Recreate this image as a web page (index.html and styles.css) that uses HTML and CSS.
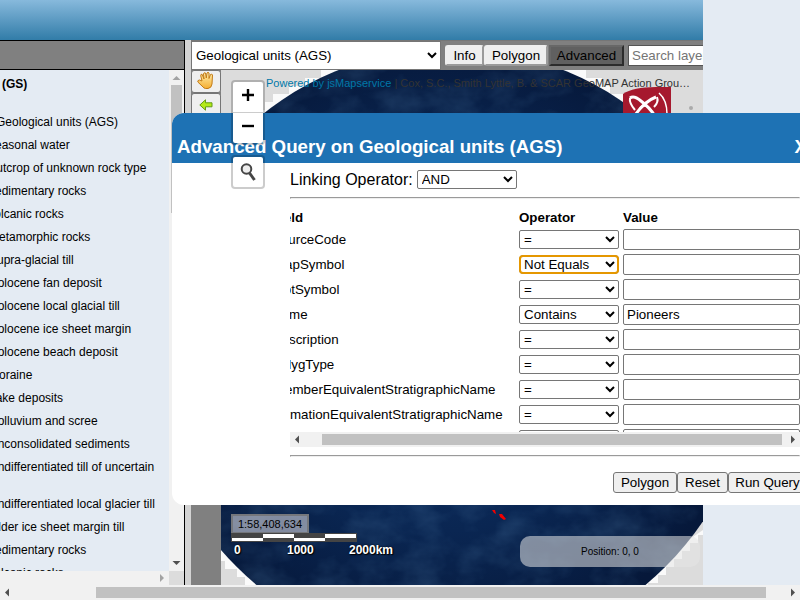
FILE: index.html
```html
<!DOCTYPE html>
<html lang="en">
<head>
<meta charset="utf-8">
<title>Geological units</title>
<link rel="stylesheet" href="styles.css">
</head>
<body>
<div class="page">
  <header class="banner"></header>
  <div class="workspace">
    <aside class="layers">
      <div class="layers-bar"></div>
      <div class="layers-main">
        <div class="layer-list">
          <div class="group">(GS)</div>
          <div class="top">Geological units (AGS)</div>
          <div class="outer">Seasonal water</div>
          <div class="outer">Outcrop of unknown rock type</div>
          <div class="outer">Sedimentary rocks</div>
          <div class="outer">Volcanic rocks</div>
          <div>Metamorphic rocks</div>
          <div>Supra-glacial till</div>
          <div>Holocene fan deposit</div>
          <div>Holocene local glacial till</div>
          <div>Holocene ice sheet margin</div>
          <div>Holocene beach deposit</div>
          <div>Moraine</div>
          <div>Lake deposits</div>
          <div>Colluvium and scree</div>
          <div>Unconsolidated sediments</div>
          <div class="tall">Undifferentiated till of uncertain</div>
          <div>Undifferentiated local glacier till</div>
          <div>Older ice sheet margin till</div>
          <div class="outer">Sedimentary rocks</div>
          <div class="outer">Volcanic rocks</div>
        </div>
        <div class="vscroll">
          <svg width="15" height="15"><path d="M3.500 10h8l-4-4z" fill="#a3a3a3"/></svg>
          <div class="vthumb"></div>
          <svg width="15" height="15"><path d="M3.500 5h8l-4 4z" fill="#505050"/></svg>
        </div>
      </div>
      <div class="layers-hscroll">
        <svg width="15" height="14"><path d="M6 3v8l4-4z" fill="#a3a3a3"/></svg>
        <div class="corner"></div>
      </div>
    </aside>
    <main class="viewer">
      <div class="toolbar">
        <select class="layer-select"><option>Geological units (AGS)</option></select>
        <div class="actions">
          <button>Info</button><button>Polygon</button><button class="active">Advanced</button>
          <input type="text" placeholder="Search layers">
        </div>
      </div>
      <div class="map-row">
        <div class="tools">
          <button><svg class="hand" width="20" height="19" viewBox="0 0 20 19"><defs><linearGradient id="hand" x2="0" y2="1"><stop offset="0" stop-color="#fff0b0"/><stop offset="1" stop-color="#f5ae32"/></linearGradient></defs><path d="M6 10 4.800 5Q4.500 3 6 3.200L8 8 7.500 3Q8 1 9.500 2l.8 5L11 2Q12 .5 13 2v5.500l1.500-4Q16 2.500 16.500 4L16 13q-.5 4-4 4.500H9.500Q8 17.500 6 15L1.800 11Q1.500 9 3.500 9z" fill="url(#hand)" stroke="#c37b16"/></svg></button>
          <button><svg width="14" height="12" viewBox="0 0 14 12"><path d="M.8 6 6.500.8v3h6.500v4H6.500v3.400z" fill="#b4ea16" stroke="#639a17"/></svg></button>
        </div>
        <div class="map">
          <svg class="globe" viewBox="221 70 482 515">
            <defs>
              <radialGradient id="sea" gradientUnits="userSpaceOnUse" cx="440" cy="345" r="310">
                <stop offset="0" stop-color="#103468"/><stop offset=".6" stop-color="#0a2652"/><stop offset="1" stop-color="#06183a"/>
              </radialGradient>
              <filter id="relief" x="0" y="0" width="1" height="1"><feTurbulence type="fractalNoise" baseFrequency=".025 .035" numOctaves="4" seed="8"/><feColorMatrix values="0 0 0 0 .1  0 0 0 0 .25  0 0 0 0 .45  1.500 0 0 0 -.58"/><feComposite in2="SourceGraphic" operator="in"/></filter>
            </defs>
            <path fill="#fafafa" d="M321 70H586v8h16v8h8v8h16v8h16v16H249v-8h16v-8h8v-8h16v-8h16v-8h16zM221 530v31h4v8h12v8h8v8h30l-10-20zM703 530v5h-5v8h-8v8h-8v8h-8v8h-8v8h-8v8h-10v2h-25z"/>
            <circle cx="451" cy="352" r="303.500" fill="url(#sea)"/>
            <circle cx="451" cy="352" r="303.500" filter="url(#relief)" opacity=".3"/>
            <path d="m492 510 3 0 1 4-2-1zM499 514l3 0 4 5-2 1-4-3z" fill="#f00000"/>
            <circle cx="691" cy="108" r="2" fill="#aaa"/>
            <path d="M623 94q10-7 33-7h15v32h-48z" fill="#a6192e"/>
            <g fill="none" stroke="#fff"><path d="M630 98q4-3 11 3 9 7 14 15M656 97q-11 4-21 18" stroke-width="3"/><path d="M630 98q-1 5 5 12M657 97q2 5-3 10M640 108q8-7 14 8" stroke-width="2"/><path d="M659 93q8 7 8 21" stroke-width="1.500"/></g>
          </svg>
          <div class="attribution"><span>Powered by jsMapservice</span> | Cox, S.C., Smith Lyttle, B. &amp; SCAR GeoMAP Action Grou…</div>
          <div class="ratio">1:58,408,634</div>
          <div class="scale">
            <svg width="126" height="9"><path d="M0 0h126v9H0z" fill="#444"/><path d="M32 1h31v4H32zM94 1h31v4H94zM1 5h31v3H1zM63 5h31v3H63z" fill="#fff"/></svg>
            <div class="scale-labels"><span>0</span><span>1000</span><span>2000km</span></div>
          </div>
          <div class="position">Position: 0, 0</div>
        </div>
      </div>
    </main>
  </div>
  <div class="hscroll page-scroll">
    <svg width="15" height="15"><path d="M9 3.500v8l-4-4z" fill="#505050"/></svg>
    <div class="track"><div class="thumb"></div></div>
    <svg width="15" height="15"><path d="M6 3.500v8l4-4z" fill="#505050"/></svg>
  </div>

  <section class="dialog">
    <div class="dialog-head"><h3>Advanced Query on Geological units (AGS)</h3><b>X</b></div>
    <div class="dialog-body">
      <div class="linking">Linking Operator: <select><option>AND</option></select></div>
      <hr>
      <div class="fields">
        <div class="grid">
          <b>Field</b><b>Operator</b><b>Value</b>
          <span>SourceCode</span><select><option>=</option></select><input type="text">
          <span class="nudge">MapSymbol</span><select class="focused"><option>Not Equals</option></select><input type="text">
          <span>PlotSymbol</span><select><option>=</option></select><input type="text">
          <span>Name</span><select><option>Contains</option></select><input type="text" value="Pioneers">
          <span>Description</span><select><option>=</option></select><input type="text">
          <span>PolygType</span><select><option>=</option></select><input type="text">
          <span class="nudge">MemberEquivalentStratigraphicName</span><select><option>=</option></select><input type="text">
          <span class="nudge-back">FormationEquivalentStratigraphicName</span><select><option>=</option></select><input type="text">
          <span></span><select><option>=</option></select><input type="text">
        </div>
      </div>
      <div class="hscroll">
        <svg width="15" height="15"><path d="M9 3.500v8l-4-4z" fill="#505050"/></svg>
        <div class="track"><div class="thumb field-thumb"></div></div>
        <svg width="15" height="15"><path d="M6 3.500v8l4-4z" fill="#505050"/></svg>
      </div>
      <hr class="lower">
      <div class="buttons"><button>Polygon</button><button>Reset</button><button>Run Query</button></div>
    </div>
  </section>

  <div class="zoom"><span><svg width="12" height="12"><path d="M6 0v12M0 6h12" stroke="#000" stroke-width="2.400"/></svg></span><span><svg width="12" height="12"><path d="M0 6h12" stroke="#000" stroke-width="2.400"/></svg></span></div>
  <div class="zoom find"><span><svg width="18" height="20"><circle cx="7.500" cy="7" r="4.800" fill="#eee" stroke="#464646" stroke-width="2"/><path d="m10.500 11 5 7" stroke="#464646" stroke-width="3"/></svg></span></div>
</div>
</body>
</html>
```
FILE: styles.css
```css
* { box-sizing: border-box; }
body { margin: 0; font-family: "Liberation Sans", Arial, sans-serif; color: #000; }
svg { display: block; flex: none; }
select, input, button { font: 13.333px "Liberation Sans", Arial, sans-serif; margin: 0; }

.page { position: relative; width: 800px; height: 600px; overflow: hidden; background: #e4ebf3; display: flex; flex-direction: column; }
.banner { width: 703px; height: 40px; flex: none; background: linear-gradient(#87b9dc, #317ca8); }
.workspace { display: flex; width: 703px; height: 545px; flex: none; background: #d3d3d3; }

.layers { width: 185px; margin-right: 6px; border-top: 1px solid #000; border-right: 1px solid #000; background: #e4ebf3; flex: none; display: flex; flex-direction: column; }
.layers-bar { height: 29px; background: #808080; border-bottom: 1px solid #000; flex: none; }
.layers-main { display: flex; height: 501px; }
.layer-list { width: 169px; overflow: hidden; font-size: 12px; }
.layer-list div { height: 23px; line-height: 23px; margin-left: -11px; white-space: nowrap; }
.layer-list .group { font-weight: bold; margin-left: 2px; margin-top: 3px; margin-bottom: 15px; }
.layer-list .top { margin-left: -4px; }
.layer-list .outer { margin-left: -13px; }
.layer-list .tall { height: 37px; }
.vscroll { width: 15px; background: #f1f1f1; display: flex; flex-direction: column; }
.vthumb { width: 11px; height: 128px; margin: 0 2px auto; background: #c1c1c1; }
.layers-hscroll { height: 14px; background: #f1f1f1; display: flex; justify-content: flex-end; }
.corner { width: 15px; background: #dcdcdc; }

.viewer { width: 512px; flex: none; display: flex; flex-direction: column; }
.toolbar { height: 30px; background: #808080; display: flex; overflow: hidden; border-top: 1px solid #767676; flex: none; }
.layer-select { width: 250px; height: 29px; background: #fff; border: 1px solid #767676; border-radius: 0; flex: none; }
.actions { display: flex; align-items: center; padding-left: 4px; flex: none; }
.actions button { height: 21px; border: 2px outset #efefef; padding: 1px 6px; background: #efefef; white-space: nowrap; flex: none; border-radius: 3px; }
.actions button:first-child { width: 39px; }
.actions button:nth-child(2) { width: 64px; padding: 1px 0; }
.actions .active { width: 75px; margin-left: 1px; padding: 1px 0; background: #606060; border: 2px solid; border-color: #686868 #2c2c2c #2c2c2c #686868; border-radius: 0; }
.actions input { width: 150px; height: 21px; margin-left: 4px; border: 1px solid #555; padding: 1px 3px; flex: none; }

.map-row { display: flex; height: 515px; }
.tools { width: 30px; background: #808080; flex: none; display: flex; flex-direction: column; }
.tools button { height: 23px; width: 30px; padding: 0; border: 1px solid #767676; border-radius: 3px; background: #efefef; display: flex; align-items: center; justify-content: center; }
.hand { margin-bottom: 2px; }
.map { position: relative; width: 482px; background: #dcdcdc; overflow: hidden; }
.globe { width: 482px; height: 515px; }
.attribution { position: absolute; left: 45px; top: 5px; font-size: 11px; line-height: 16px; color: #333; white-space: nowrap; }
.attribution span { color: #0078a8; }
.ratio { position: absolute; left: 10px; top: 444px; width: 78px; height: 20px; border: 2px solid #75777c; background: rgba(211, 211, 220, .6); font-size: 11px; line-height: 17px; text-align: center; }
.scale { position: absolute; left: 10px; top: 463px; }
.scale-labels { display: flex; width: 162px; padding-left: 3px; justify-content: space-between; font-size: 12px; font-weight: bold; line-height: 14px; margin-top: 1px; color: #fff; text-shadow: 0 0 2px #000, 1px 1px 1px #000; }
.scale-labels span:nth-child(2) { margin-left: 11px; }
.position { position: absolute; left: 299px; top: 466px; width: 180px; height: 31px; border-radius: 10px; background: rgba(230, 230, 230, .55); font-size: 10px; line-height: 31px; text-align: center; }

.hscroll { display: flex; height: 15px; background: #f1f1f1; }
.track { flex: 1; }
.thumb { height: 11px; margin: 2px 0 0 81px; width: 670px; background: #c1c1c1; }
.field-thumb { margin-left: 17px; width: 460px; }

.dialog { position: absolute; left: 172px; top: 113px; width: 660px; height: 392px; border-radius: 12px; background: #fff; overflow: hidden; }
.dialog-head { height: 50px; background: #1e72b4; color: #fff; display: flex; justify-content: space-between; align-items: flex-end; padding: 0 25px 5px 5px; font-size: 18.720px; line-height: 23px; }
.dialog-head h3 { margin: 0; font-size: inherit; }
.dialog-body { margin-left: 118px; width: 510px; }
.linking { height: 34px; display: flex; align-items: center; gap: 4px; padding-bottom: 1px; }
select { height: 19px; border: 1px solid #767676; border-radius: 2px; background: #fff; color: #000; }
.linking select { width: 100px; }
hr { margin: 0; height: 2px; border: 1px solid; border-color: #9a9a9a #eee #eee #9a9a9a; }
.fields { height: 233px; overflow: hidden; padding-top: 6px; font-size: 13.333px; }
.grid { display: grid; grid-template-columns: 243px 100px 177px; column-gap: 4px; grid-template-rows: 22px; grid-auto-rows: 25px; align-items: center; margin-left: -18px; }
.grid b { padding-top: 3px; }
.grid input { width: 177px; height: 21px; border: 1px solid #767676; border-radius: 2px; padding: 1px 3px; }
.nudge { margin-left: 2px; }
.nudge-back { margin-left: -2px; }
.focused { outline: 2px solid #e59700; outline-offset: -2px; border-radius: 4px; }
.lower { margin-top: 8px; }
.buttons { display: flex; margin: 15px 0 0 323px; }
.buttons button { height: 21px; border: 1px solid #767676; border-radius: 3px; background: #efefef; padding: 1px 0; white-space: nowrap; flex: none; width: 64px; }
.buttons button:nth-child(2) { width: 51px; }
.buttons button:nth-child(3) { width: 79px; }

.zoom { position: absolute; left: 231px; top: 80px; width: 34px; border: 2px solid rgba(0, 0, 0, .2); border-radius: 4px; background: #fff; background-clip: padding-box; }
.zoom span { height: 30px; display: flex; align-items: center; justify-content: center; }
.zoom span + span { height: 31px; border-top: 1px solid #ccc; padding-bottom: 4px; }
.zoom span:first-child { padding-bottom: 5px; }
.zoom + .find { top: 155px; }
.find span:first-child { height: 30px; padding: 0; }
```
